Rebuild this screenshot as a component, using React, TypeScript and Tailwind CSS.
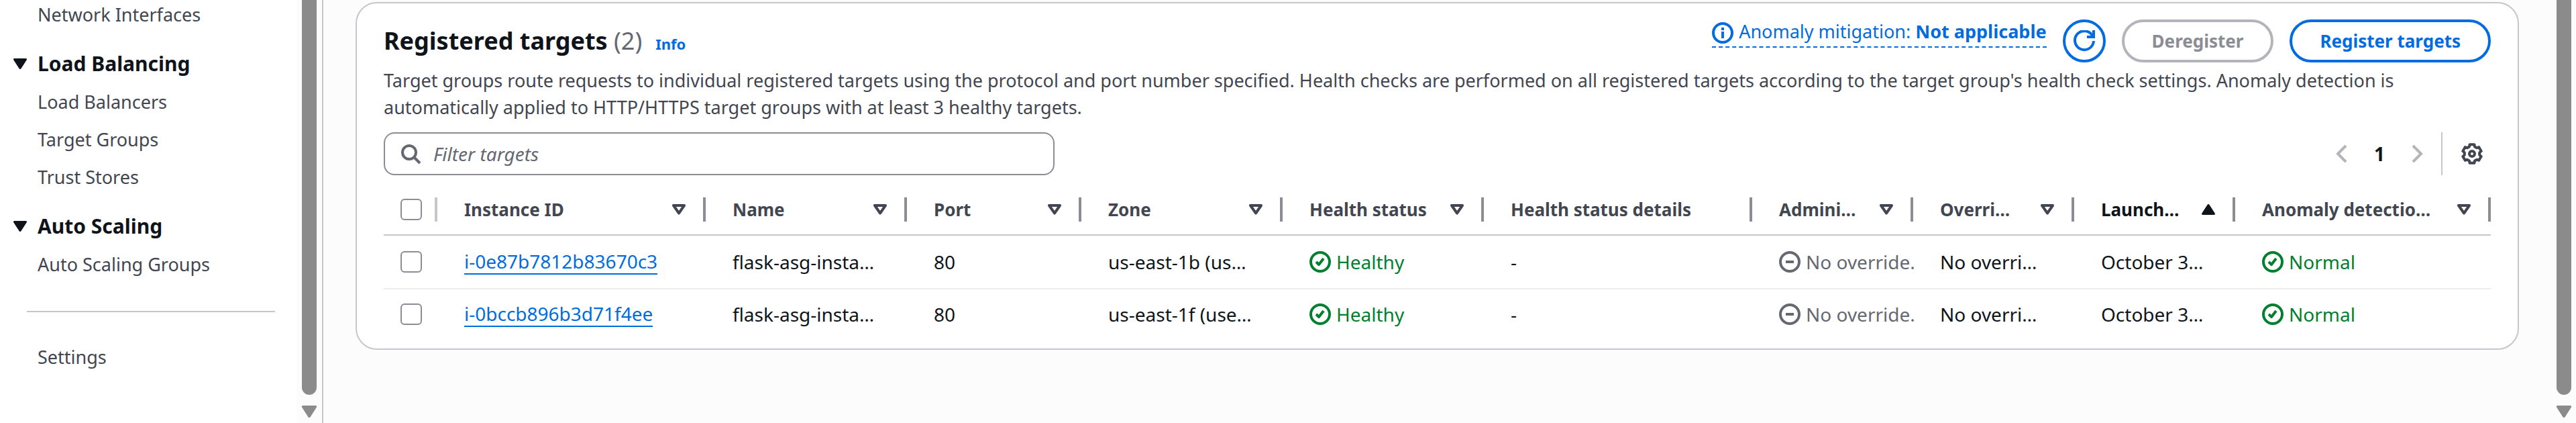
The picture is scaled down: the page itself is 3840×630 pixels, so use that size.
import type { ReactNode } from 'react';

function Icon({ children, className = '' }: { children: ReactNode; className?: string }) {
  return (
    <svg
      viewBox="0 0 16 16"
      className={`size-8 shrink-0 ${className}`}
      fill="none"
      stroke="currentColor"
      strokeWidth="2"
      aria-hidden="true"
    >
      {children}
    </svg>
  );
}

function CheckIcon() {
  return (
    <Icon>
      <circle cx="8" cy="8" r="7" />
      <path d="m5 8 2 2 3.5-4.5" strokeLinejoin="round" />
    </Icon>
  );
}

function MinusIcon() {
  return (
    <Icon>
      <circle cx="8" cy="8" r="7" />
      <path d="M5 8h6" />
    </Icon>
  );
}

function CaretDown({ className = '' }: { className?: string }) {
  return (
    <svg viewBox="0 0 20 16" className={className} fill="currentColor" aria-hidden="true">
      <path d="M1.5 0h17c1.300 0 1.900 1.400 1.100 2.400L11.500 15.100c-.8 1.200-2.200 1.200-3 0L.4 2.400C-.4 1.400.2 0 1.500 0z" />
    </svg>
  );
}

function SortIcon({ sorted }: { sorted?: boolean }) {
  return sorted ? (
    <CaretDown className="h-4 w-5 rotate-180" />
  ) : (
    <svg
      viewBox="0 0 20 16"
      className="h-4 w-5"
      fill="none"
      stroke="currentColor"
      strokeWidth="4"
      strokeLinejoin="round"
      aria-hidden="true"
    >
      <path d="M2 2h16L10 13.500z" />
    </svg>
  );
}

function NavHeading({ children }: { children: ReactNode }) {
  return (
    <h3>
      <button
        type="button"
        className="mt-8 mb-4 flex items-center gap-4 pl-5 text-[30px] leading-[42px] font-bold text-[#0f141a]"
      >
        <CaretDown className="h-4 w-5" />
        {children}
      </button>
    </h3>
  );
}

function NavLinks({ items }: { items: string[] }) {
  return (
    <ul className="flex flex-col gap-4 pl-14 text-[27px] leading-10 text-[#424650]">
      {items.map((item) => (
        <li key={item}>
          <a href="#">{item}</a>
        </li>
      ))}
    </ul>
  );
}

function Scrollbar({ className }: { className: string }) {
  return (
    <div aria-hidden="true" className={`flex shrink-0 flex-col items-center gap-4 bg-[#fcfcfc] pb-2 ${className}`}>
      <div className="w-[22px] flex-1 rounded-b-full bg-[#8b8b8b]" />
      <CaretDown className="h-[18px] w-6 text-[#8b8b8b]" />
    </div>
  );
}

type Column = { label: string; width: string; sortable?: boolean; sorted?: boolean };

const columns: Column[] = [
  { label: 'Instance ID', width: 'w-[400px]', sortable: true },
  { label: 'Name', width: 'w-[300px]', sortable: true },
  { label: 'Port', width: 'w-[260px]', sortable: true },
  { label: 'Zone', width: 'w-[300px]', sortable: true },
  { label: 'Health status', width: 'w-[300px]', sortable: true },
  { label: 'Health status details', width: 'w-[400px]' },
  { label: 'Admini…', width: 'w-[240px]', sortable: true },
  { label: 'Overri…', width: 'w-[240px]', sortable: true },
  { label: 'Launch…', width: 'w-[240px]', sortable: true, sorted: true },
  { label: 'Anomaly detectio…', width: 'w-auto', sortable: true },
];

const rows = [
  { id: 'i-0e87b7812b83670c3', zone: 'us-east-1b (us…' },
  { id: 'i-0bccb896b3d71f4ee', zone: 'us-east-1f (use…' },
];

const checkbox = 'block size-8 appearance-none rounded-md border-2 border-[#8c8c94] bg-white';

function Status({ tone, icon, children }: { tone: string; icon: ReactNode; children: ReactNode }) {
  return (
    <span className={`flex items-center gap-2 ${tone}`}>
      {icon}
      {children}
    </span>
  );
}

export default function App() {
  return (
    <div className="flex min-h-screen bg-[#fcfcfc] font-['Noto_Sans',sans-serif] text-[#0f141a]">
      <nav className="w-[442px] shrink-0 bg-white pt-0.5">
        <NavLinks items={['Network Interfaces']} />
        <NavHeading>Load Balancing</NavHeading>
        <NavLinks items={['Load Balancers', 'Target Groups', 'Trust Stores']} />
        <NavHeading>Auto Scaling</NavHeading>
        <NavLinks items={['Auto Scaling Groups']} />
        <hr className="mt-[49px] mr-8 mb-[47px] ml-10 border-t-2 border-[#c6c6cd]" />
        <NavLinks items={['Settings']} />
      </nav>
      <Scrollbar className="w-[38px]" />
      <main className="min-w-0 flex-1 border-l-2 border-[#c6c6cd] pt-[3px] pr-[49px] pl-12">
        <section className="rounded-[32px] border-2 border-[#c6c6cd] bg-white px-10 pt-6 pb-3.5">
          <div className="flex items-start justify-between">
            <div className="mt-2 flex items-baseline leading-[48px]">
              <h2 className="text-[36px] font-bold">
                Registered targets <span className="font-normal text-[#656871]">(2)</span>
              </h2>
              <a href="#" className="ml-5 text-[22px] font-bold text-[#006ce0]">
                Info
              </a>
            </div>
            <div className="flex items-start gap-6">
              <button
                type="button"
                className="flex items-start gap-2 border-b-2 border-dashed border-[#006ce0] pb-1 text-[27px] leading-9 text-[#006ce0]"
              >
                <Icon className="mt-1">
                  <circle cx="8" cy="8" r="7" />
                  <path d="M8 12V7M8 6V4" />
                </Icon>
                <span>
                  Anomaly mitigation: <b>Not applicable</b>
                </span>
              </button>
              <button
                type="button"
                aria-label="Refresh"
                className="flex size-16 items-center justify-center rounded-full border-4 border-[#006ce0] text-[#006ce0]"
              >
                <Icon>
                  <path d="M10 5h5V0" />
                  <path d="M15 8a7 7 0 1 1-.7-3.500" />
                </Icon>
              </button>
              <button
                type="button"
                disabled
                className="h-16 rounded-full border-4 border-[#b4b4bb] px-[41px] text-[26px] font-bold text-[#8c8c94]"
              >
                Deregister
              </button>
              <button
                type="button"
                className="h-16 rounded-full border-4 border-[#006ce0] px-[41px] text-[26px] font-bold text-[#006ce0]"
              >
                Register targets
              </button>
            </div>
          </div>
          <p className="mt-[7px] max-w-[3040px] text-[27px] leading-10 text-[#424650]">
            Target groups route requests to individual registered targets using the protocol and port number specified.
            Health checks are performed on all registered targets according to the target group's health check settings.
            Anomaly detection is automatically applied to HTTP/HTTPS target groups with at least 3 healthy targets.
          </p>
          <div className="mt-[17px] flex items-center justify-between">
            <label className="flex h-16 w-[1000px] items-center gap-[18px] rounded-2xl border-2 border-[#8c8c94] px-[22px] text-[#656871]">
              <Icon>
                <circle cx="7" cy="7" r="5" />
                <path d="m15 15-4.500-4.500" />
              </Icon>
              <input
                type="search"
                aria-label="Filter targets"
                placeholder="Filter targets"
                className="min-w-0 flex-1 bg-transparent text-[28px] outline-none placeholder:text-[#656871] placeholder:italic"
              />
            </label>
            <div className="flex items-center pr-3">
              <button type="button" aria-label="Previous page" disabled className="text-[#b4b4bb]">
                <Icon>
                  <path d="M11 2 5 8l6 6" />
                </Icon>
              </button>
              <button type="button" className="w-20 text-center text-[28px] font-bold">
                1
              </button>
              <button type="button" aria-label="Next page" disabled className="text-[#b4b4bb]">
                <Icon>
                  <path d="m5 2 6 6-6 6" />
                </Icon>
              </button>
              <div className="mr-7 ml-5 h-16 w-0.5 bg-[#c6c6cd]" />
              <button type="button" aria-label="Preferences" className="text-[#424650]">
                <Icon>
                  <path
                    strokeLinejoin="round"
                    d="M6.300 1.100 9.700 1.100 10 2.700 11.590 3.620 13.130 3.080 14.830 6.020 13.590 7.080 13.590 8.920 14.830 9.980 13.130 12.920 11.590 12.380 10 13.300 9.700 14.900 6.300 14.900 6 13.300 4.410 12.380 2.870 12.920 1.170 9.980 2.410 8.920 2.410 7.080 1.170 6.020 2.870 3.080 4.410 3.620 6 2.700Z"
                  />
                  <circle cx="8" cy="8" r="2" />
                </Icon>
              </button>
            </div>
          </div>
          <table className="mt-3.5 w-full table-fixed border-separate border-spacing-0 text-left whitespace-nowrap">
            <thead>
              <tr className="h-[76px] text-[26px] text-[#424650]">
                <th className="w-20 border-b-2 border-[#c6c6cd] p-0">
                  <div className="flex items-center justify-between pl-[25px]">
                    <input type="checkbox" aria-label="Select all targets" className={checkbox} />
                    <div className="h-9 w-1 bg-[#c6c6cd]" />
                  </div>
                </th>
                {columns.map((c) => (
                  <th
                    key={c.label}
                    aria-sort={c.sorted ? 'ascending' : undefined}
                    className={`border-b-2 border-[#c6c6cd] p-0 pl-10 ${c.width} ${c.sorted ? 'text-[#0f141a]' : ''}`}
                  >
                    <div className="flex items-center justify-between gap-[26px]">
                      {c.sortable ? (
                        <button type="button" className="flex flex-1 items-center justify-between">
                          {c.label}
                          <SortIcon sorted={c.sorted} />
                        </button>
                      ) : (
                        c.label
                      )}
                      <div className="h-9 w-1 bg-[#8c8c94]" />
                    </div>
                  </th>
                ))}
              </tr>
            </thead>
            <tbody className="text-[28px] [&_td]:p-0 [&_td]:pl-10">
              {rows.map((r, i) => (
                <tr key={r.id} className={i === 0 ? 'h-20 [&>td]:border-b-2 [&>td]:border-[#ebebf0]' : 'h-[74px]'}>
                  <td>
                    <input type="checkbox" aria-label={`Select ${r.id}`} className={`-ml-[15px] ${checkbox}`} />
                  </td>
                  <td>
                    <a href="#" className="block w-fit border-b-2 border-[#006ce0] leading-9 text-[#006ce0]">
                      {r.id}
                    </a>
                  </td>
                  <td>flask-asg-insta…</td>
                  <td>80</td>
                  <td>{r.zone}</td>
                  <td>
                    <Status tone="text-[#00802f]" icon={<CheckIcon />}>
                      Healthy
                    </Status>
                  </td>
                  <td>-</td>
                  <td>
                    <Status tone="text-[#656871]" icon={<MinusIcon />}>
                      No override.
                    </Status>
                  </td>
                  <td>No overri…</td>
                  <td>October 3…</td>
                  <td>
                    <Status tone="text-[#00802f]" icon={<CheckIcon />}>
                      Normal
                    </Status>
                  </td>
                </tr>
              ))}
            </tbody>
          </table>
        </section>
      </main>
      <Scrollbar className="w-9" />
    </div>
  );
}
